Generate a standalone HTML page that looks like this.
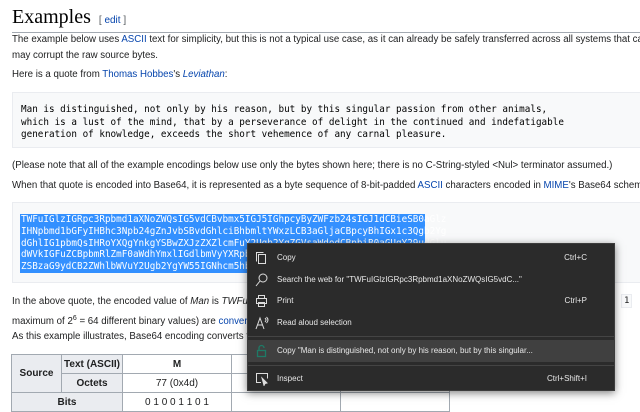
<!DOCTYPE html>
<html><head><meta charset="utf-8"><style>
*{margin:0;padding:0;box-sizing:border-box}
body{width:640px;height:400px;overflow:hidden;background:#fff;font-family:"Liberation Sans",sans-serif;font-size:9.7px;color:#202122;position:relative}
.a{position:absolute;white-space:nowrap;line-height:12px}
a{color:#0645ad;text-decoration:none}
h2{position:absolute;left:12px;top:6px;font-family:"Liberation Serif",serif;font-weight:normal;font-size:20px;color:#000}
h2 span{font-family:"Liberation Sans",sans-serif;font-size:10px;color:#54595d;margin-left:8px}
.rule{position:absolute;left:12px;right:0;top:32px;height:1px;background:#a2a9b1}
.pre{position:absolute;left:12px;right:-5px;background:#f8f9fa;border:1px solid #eaecf0}
.mono{font-family:"DejaVu Sans Mono","Liberation Mono",monospace;font-size:9.3px;color:#000}
.sel{background:#3390ff;color:#fff;font-family:"DejaVu Sans Mono",monospace;font-size:9.3px;line-height:11.8px;position:absolute;left:20px;top:214px;width:405px;padding:0 1px}
.menu{position:absolute;left:247px;top:243px;width:368px;height:148px;background:#2b2b2b;border:1px solid #3c3c3c;box-shadow:0 2px 8px rgba(0,0,0,.5);color:#e8e8e8;font-size:8px}
.mi{position:absolute;left:0;right:0;height:21px;line-height:21px}
.mi .t{position:absolute;left:29px}
.mi .k{position:absolute;right:27px}
.mi svg{position:absolute;left:7px;top:4px}
.sep{position:absolute;left:0;right:0;height:1px;background:#444}
table{position:absolute;left:11px;top:354px;border-collapse:collapse;font-size:10px}
td,th{border:1px solid #a2a9b1;height:19px;text-align:center;padding:0}
th{background:#eaecf0;font-weight:bold}
</style></head><body>
<h2>Examples<span>[ <a>edit</a> ]</span></h2>
<div class="rule"></div>
<div class="a" style="left:12px;top:34px">The example below uses <a>ASCII</a> text for simplicity, but this is not a typical use case, as it can already be safely transferred across all systems that can</div>
<div class="a" style="left:12px;top:50px">may corrupt the raw source bytes.</div>
<div class="a" style="left:12px;top:69px">Here is a quote from <a>Thomas Hobbes</a>'s <i><a>Leviathan</a></i>:</div>
<div class="pre" style="top:92px;height:56px"></div>
<div class="a mono" style="left:21px;top:104px;line-height:12.5px">Man is distinguished, not only by his reason, but by this singular passion from other animals,<br>which is a lust of the mind, that by a perseverance of delight in the continued and indefatigable<br>generation of knowledge, exceeds the short vehemence of any carnal pleasure.</div>
<div class="a" style="left:12px;top:160px">(Please note that all of the example encodings below use only the bytes shown here; there is no C-String-styled &lt;Nul&gt; terminator assumed.)</div>
<div class="a" style="left:12px;top:180px">When that quote is encoded into Base64, it is represented as a byte sequence of 8-bit-padded <a>ASCII</a> characters encoded in <a>MIME</a>'s Base64 scheme</div>
<div class="pre" style="top:202px;height:81px"></div>
<div class="sel">TWFuIGlzIGRpc3Rpbmd1aXNoZWQsIG5vdCBvbmx5IGJ5IGhpcyByZWFzb24sIGJ1dCBieSB0aGlz<br>IHNpbmd1bGFyIHBhc3Npb24gZnJvbSBvdGhlciBhbmltYWxzLCB3aGljaCBpcyBhIGx1c3Qgb2Yg<br>dGhlIG1pbmQsIHRoYXQgYnkgYSBwZXJzZXZlcmFuY2Ugb2YgZGVsaWdodCBpbiB0aGUgY29udGlu<br>dWVkIGFuZCBpbmRlZmF0aWdhYmxlIGdlbmVyYXRpb24gb2Yga25vd2xlZGdlLCBleGNlZWRzIHRo<br>ZSBzaG9ydCB2ZWhlbWVuY2Ugb2YgYW55IGNhcm5hbCBwbGVhc3VyZS4=</div>
<div class="a" style="left:12px;top:296px">In the above quote, the encoded value of <i>Man</i> is <i>TWFu</i>. Encoded in ASCII, the characters M, a, and n are stored as the bytes and</div>
<div class="a" style="left:621px;top:294px;background:#f8f9fa;border:1px solid #eaecf0;padding:0 2px;font-family:'DejaVu Sans Mono',monospace;font-size:9px">1</div>
<div class="a" style="left:12px;top:313px">maximum of 2<sup style="font-size:7px">6</sup> = 64 different binary values) are <a>converted</a> into the numerals 0-63 ... then converted into a 24-bit str</div>
<div class="a" style="left:12px;top:331px">As this example illustrates, Base64 encoding converts three octets into four encoded characters.</div>
<table><tr><th rowspan="2" style="width:50px">Source</th><th style="width:61px">Text (ASCII)</th><td style="width:109px;font-weight:bold">M</td><td style="width:109px;font-weight:bold">a</td><td style="width:109px;font-weight:bold">n</td></tr>
<tr><th>Octets</th><td>77 (0x4d)</td><td>97 (0x61)</td><td>110 (0x6e)</td></tr>
<tr><th colspan="2">Bits</th><td>0 1 0 0 1 1 0 1</td><td></td><td></td></tr></table>
<div class="menu">
<div class="mi" style="top:3px"><svg width="13" height="14" viewBox="0 0 13 14" fill="none" stroke="#ddd"><rect x="3.5" y="3.5" width="7" height="9"/><path d="M1.5 10.5V1.5h7"/></svg><span class="t">Copy</span><span class="k">Ctrl+C</span></div>
<div class="mi" style="top:25px"><svg width="13" height="14" viewBox="0 0 13 14" fill="none" stroke="#ddd"><circle cx="8" cy="5" r="4"/><path d="M5 8l-4 5"/></svg><span class="t">Search the web for "TWFuIGlzIGRpc3Rpbmd1aXNoZWQsIG5vdC..."</span></div>
<div class="mi" style="top:46px"><svg width="13" height="14" viewBox="0 0 13 14" fill="none" stroke="#ddd"><rect x="3.5" y="1.5" width="6" height="3"/><rect x="1.5" y="4.5" width="10" height="5"/><rect x="3.5" y="8.5" width="6" height="4"/></svg><span class="t">Print</span><span class="k">Ctrl+P</span></div>
<div class="mi" style="top:68px"><svg width="14" height="14" viewBox="0 0 14 14" fill="none" stroke="#ddd"><path d="M1 13L5 2l4 11M2.5 9h5M10 2q2 2 0 4M11.5 1q3 3 0 6"/></svg><span class="t">Read aloud selection</span></div>
<div class="sep" style="top:92px"></div>
<div class="mi" style="top:96px;height:22px;background:#404040"><svg width="13" height="14" viewBox="0 0 13 14" fill="none" stroke="#1e7a66" stroke-width="1.3"><rect x="2.5" y="6.5" width="8" height="6"/><path d="M4 6.5V4a2.5 2.5 0 015 0"/></svg><span class="t">Copy "Man is distinguished, not only by his reason, but by this singular...</span></div>
<div class="sep" style="top:121px"></div>
<div class="mi" style="top:124px"><svg width="14" height="14" viewBox="0 0 14 14" fill="none" stroke="#ddd"><path d="M6 10.5H1.5v-9h11v5"/><path d="M7 6l5 5-2 0.5-1 2z" fill="#ddd"/></svg><span class="t">Inspect</span><span class="k">Ctrl+Shift+I</span></div>
</div>
</body></html>
